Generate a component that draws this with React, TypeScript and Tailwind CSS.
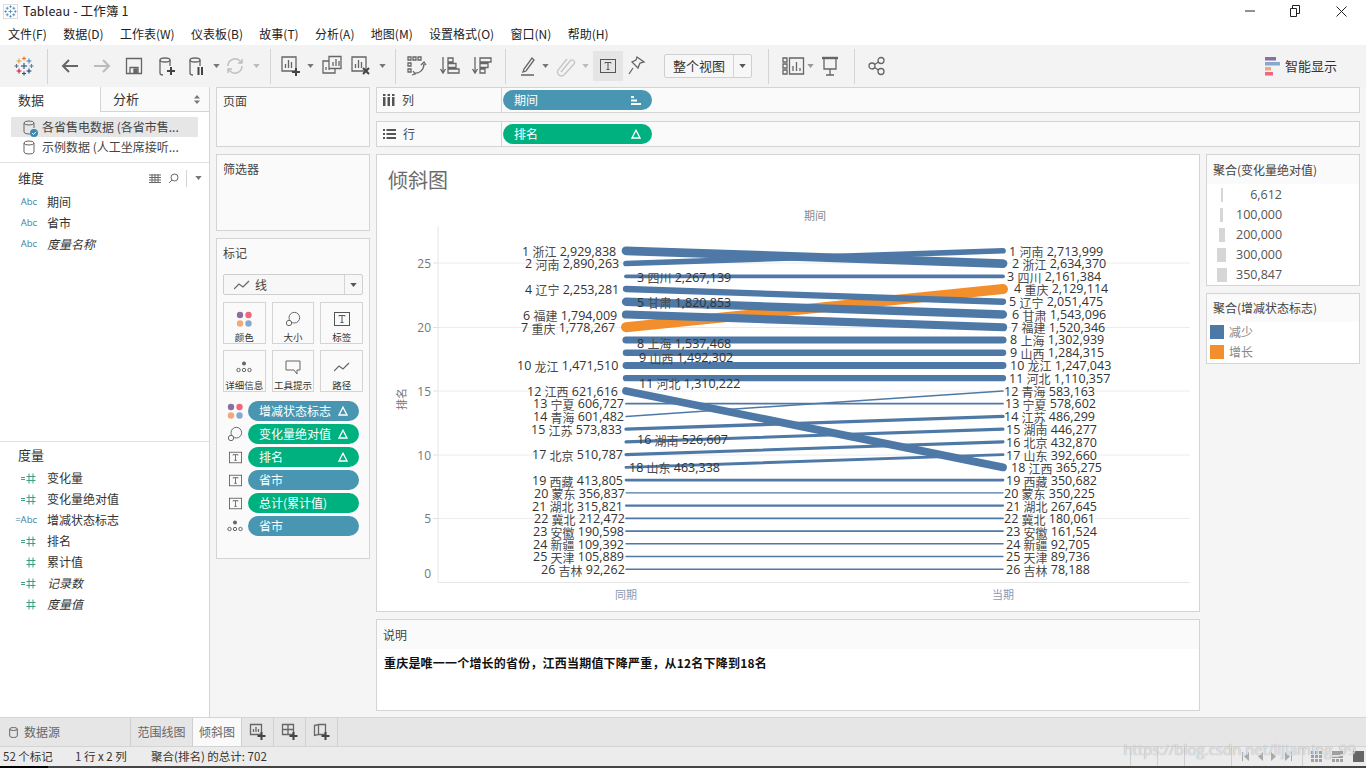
import { ReactNode } from "react"

const ui = "font-['Noto_Sans_CJK_SC','Open_Sans',sans-serif]"
const gray = "#666666"

const leftLabels: [number, string, string, number, number][] = [
  [1, "浙江", "2,929,838", 522, 251],
  [2, "河南", "2,890,263", 525, 263.5],
  [3, "四川", "2,267,139", 637, 277],
  [4, "辽宁", "2,253,281", 525, 289],
  [5, "甘肃", "1,820,853", 637, 302],
  [6, "福建", "1,794,009", 523, 315],
  [7, "重庆", "1,778,267", 521, 327.5],
  [8, "上海", "1,537,468", 637, 343],
  [9, "山西", "1,492,302", 639, 357.5],
  [10, "龙江", "1,471,510", 517, 365.5],
  [11, "河北", "1,310,222", 639, 383],
  [12, "江西", "621,616", 527, 391],
  [13, "宁夏", "606,727", 533, 403.5],
  [14, "青海", "601,482", 533, 416.5],
  [15, "江苏", "573,833", 531, 429.5],
  [16, "湖南", "526,607", 637, 439.5],
  [17, "北京", "510,787", 532, 454.5],
  [18, "山东", "463,338", 629, 467],
  [19, "西藏", "413,805", 532, 480.5],
  [20, "蒙东", "356,837", 534, 493],
  [21, "湖北", "315,821", 532, 506],
  [22, "冀北", "212,472", 534, 518.5],
  [23, "安徽", "190,598", 533, 531.5],
  [24, "新疆", "109,392", 533, 544],
  [25, "天津", "105,889", 533, 556.5],
  [26, "吉林", "92,262", 541, 569.5],
]

const rightLabels: [number, string, string, number, number][] = [
  [1, "河南", "2,713,999", 1009, 251],
  [2, "浙江", "2,634,370", 1012, 263.5],
  [3, "四川", "2,161,384", 1007, 276.5],
  [4, "重庆", "2,129,114", 1014, 288.5],
  [5, "辽宁", "2,051,475", 1009, 301.5],
  [6, "甘肃", "1,543,096", 1012, 314.5],
  [7, "福建", "1,520,346", 1011, 327],
  [8, "上海", "1,302,939", 1010, 339.5],
  [9, "山西", "1,284,315", 1010, 352.5],
  [10, "龙江", "1,247,043", 1010, 365],
  [11, "河北", "1,110,357", 1009, 378],
  [12, "青海", "583,163", 1004, 391],
  [13, "宁夏", "578,602", 1005, 403.5],
  [14, "江苏", "486,299", 1004, 416.5],
  [15, "湖南", "446,277", 1006, 429],
  [16, "北京", "432,870", 1006, 442],
  [17, "山东", "392,660", 1006, 455],
  [18, "江西", "365,275", 1011, 467.5],
  [19, "西藏", "350,682", 1006, 480.5],
  [20, "蒙东", "350,225", 1004, 493],
  [21, "湖北", "267,645", 1006, 506],
  [22, "冀北", "180,061", 1004, 518.5],
  [23, "安徽", "161,524", 1006, 531.5],
  [24, "新疆", "92,705", 1006, 544],
  [25, "天津", "89,736", 1006, 556.5],
  [26, "吉林", "78,188", 1006, 569.5],
]

// from rank, to rank, change in thousands
const lines: [number, number, number][] = [
  [2, 1, 176], [1, 2, 295], [3, 3, 106], [4, 5, 202], [5, 6, 278], [6, 7, 274],
  [8, 8, 235], [9, 9, 208], [10, 10, 224], [11, 11, 200], [12, 18, 256], [13, 13, 28],
  [14, 12, 18], [15, 14, 87], [16, 15, 80], [17, 16, 78], [18, 17, 71], [19, 19, 63],
  [20, 20, 6.6], [21, 21, 48], [22, 22, 32], [23, 23, 29], [24, 24, 17], [25, 25, 16], [26, 26, 14],
]

const rankY = (r: number) => 250.8 + (r - 1) * 12.74

function Crosses({ size = 20, mono }: { size?: number; mono?: string }) {
  const c = (x: number, y: number, r: number, col: string, w = 1.1) => (
    <g stroke={mono ?? col} strokeWidth={w} key={`${x}-${y}`}>
      <line x1={x - r} y1={y} x2={x + r} y2={y} />
      <line x1={x} y1={y - r} x2={x} y2={y + r} />
    </g>
  )
  return (
    <svg width={size} height={size} viewBox="0 0 20 20">
      {c(10, 10, 3, "#2f4f7f")}
      {c(10, 2.5, 2, "#e8762b")}
      {c(10, 17.5, 2, "#2f4f7f")}
      {c(2.5, 10, 2, "#5b6f99")}
      {c(17.5, 10, 2, "#4c87b9")}
      {c(5, 5, 2.4, "#e8a23b")}
      {c(15, 5, 2.4, "#4c87b9")}
      {c(5, 15, 2.4, "#c72037")}
      {c(15, 15, 2.4, "#1f447a")}
    </svg>
  )
}

function Ico({ w = 22, h = 22, children }: { w?: number; h?: number; children: ReactNode }) {
  return (
    <svg width={w} height={h} viewBox={`0 0 ${w} ${h}`} fill="none" stroke={gray} strokeWidth="1.3">
      {children}
    </svg>
  )
}

const Plus = ({ x, y }: { x: number; y: number }) => (
  <path d={`M${x - 4} ${y}h8M${x} ${y - 4}v8`} stroke="#444" strokeWidth="2" />
)

const Cyl = ({ x = 5, h = 15 }: { x?: number; h?: number }) => (
  <>
    <ellipse cx={x + 5} cy="5" rx="5" ry="2" />
    <path d={`M${x} 5v${h - 2}q0 2 3 2M${x + 10} 5v6`} />
  </>
)

function TBox({ size = 18 }: { size?: number }) {
  return (
    <svg width={size} height={size - 2} viewBox="0 0 18 16" fill="none" stroke="#555">
      <rect x="1.5" y="1.5" width="15" height="13" />
      <path d="M6 5.5v-1h6v1M9 4.5v7M7.5 11.5h3" />
    </svg>
  )
}

function Dots() {
  return (
    <svg width="20" height="20" viewBox="0 0 20 20">
      <circle cx="6" cy="6" r="3.2" fill="#8b6f9e" />
      <circle cx="14.5" cy="6" r="3.2" fill="#f0667e" />
      <circle cx="6" cy="14.5" r="3.2" fill="#f2a878" />
      <circle cx="14.5" cy="14.5" r="3.2" fill="#88a8d0" />
    </svg>
  )
}

function SizeIco() {
  return (
    <svg width="16" height="16" viewBox="0 0 18 18" fill="none" stroke="#666" strokeWidth="1.1">
      <circle cx="10.5" cy="7.5" r="6" />
      <circle cx="4.5" cy="13.5" r="3" fill="#fafafa" />
    </svg>
  )
}

function DetailIco() {
  return (
    <svg width="16" height="12" viewBox="0 0 16 12" fill="none" stroke="#666">
      <circle cx="8" cy="2.5" r="2" fill="#666" stroke="none" />
      <circle cx="2.5" cy="9" r="1.7" />
      <circle cx="8" cy="9" r="1.7" />
      <circle cx="13.5" cy="9" r="1.7" />
    </svg>
  )
}

const Caret = ({ color = "#777" }: { color?: string }) => (
  <svg width="7" height="4" viewBox="0 0 8 5">
    <path d="M0 0h8L4 5z" fill={color} />
  </svg>
)

function Delta() {
  return (
    <svg width="10" height="10" viewBox="0 0 10 10" fill="none" stroke="#fff" strokeWidth="1.3">
      <path d="M5 1.2L9 9H1z" />
    </svg>
  )
}

function Pill({ label, color, delta, sort }: { label: string; color: "blue" | "green"; delta?: boolean; sort?: boolean }) {
  return (
    <div className={`flex h-[20px] w-full items-center justify-between rounded-[10px] pl-[11px] pr-[11px] text-[12px] text-white ${color === "blue" ? "bg-[#4996b2]" : "bg-[#00b180]"}`}>
      <span className="whitespace-nowrap">{label}</span>
      {delta && <Delta />}
      {sort && (
        <svg width="10" height="9" viewBox="0 0 10 9" fill="#fff">
          <rect x="0" y="0" width="3" height="2" />
          <rect x="0" y="3.5" width="6" height="2" />
          <rect x="0" y="7" width="10" height="2" />
        </svg>
      )}
    </div>
  )
}

const Divider = ({ className = "" }: { className?: string }) => <div className={`h-[35px] w-px shrink-0 bg-[#d4d4d4] ${className}`} />

function Btn({ className, children }: { className: string; children: ReactNode }) {
  return <div className={`flex h-[30px] shrink-0 items-center justify-center ${className}`}>{children}</div>
}

function Toolbar() {
  return (
    <div className="flex h-[42px] shrink-0 items-center bg-[#f3f3f3]">
      <Btn className="w-[47px]"><Crosses /></Btn>
      <Divider />
      <Btn className="ml-[6px] w-[32px]">
        <Ico><path d="M19 11H4M10 5l-6 6 6 6" stroke="#666" strokeWidth="2" /></Ico>
      </Btn>
      <Btn className="w-[32px]">
        <Ico><path d="M3 11h15M12 5l6 6-6 6" stroke="#bbb" strokeWidth="2" /></Ico>
      </Btn>
      <Btn className="w-[32px]">
        <Ico w={18} h={18}><path d="M1.5 1.5h15v15h-15zM5 16.5v-6h8v6" /><rect x="9" y="12" width="3" height="4" fill="#666" /></Ico>
      </Btn>
      <Btn className="w-[32px]">
        <Ico><Cyl /><Plus x={16} y={16} /></Ico>
      </Btn>
      <Btn className="w-[28px]">
        <Ico><Cyl /><path d="M13.5 12v8M17 12v8" stroke="#444" strokeWidth="2" /></Ico>
      </Btn>
      <Btn className="w-[12px]"><Caret /></Btn>
      <Btn className="w-[26px]">
        <Ico w={20} h={20}><path d="M3 10a7 7 0 0 1 12-5l2 2M17 10a7 7 0 0 1-12 5l-2-2M17 3v4h-4M3 17v-4h4" stroke="#c0c0c0" strokeWidth="1.5" /></Ico>
      </Btn>
      <Btn className="w-[16px]"><Caret color="#bbb" /></Btn>
      <Divider className="ml-[6px]" />
      <Btn className="ml-[6px] w-[28px]">
        <Ico><path d="M2 2h14v14h-14zM5.5 13V9M8.5 13V5M11.5 13V7" /><Plus x={16} y={17} /></Ico>
      </Btn>
      <Btn className="w-[10px]"><Caret /></Btn>
      <Btn className="ml-[3px] w-[28px]">
        <Ico><path d="M8 1.5h12v12h-12zM12 11V7M15 11V4M18 11V6M8 6H2v12h12v-4.5M5 15v-3M8 15v-5" /></Ico>
      </Btn>
      <Btn className="ml-[1px] w-[28px]">
        <Ico><path d="M2 2h14v14h-14zM5.5 13V9M8.5 13V5M11.5 13V7" /><path d="M13 13l6 6M19 13l-6 6" stroke="#444" strokeWidth="2" /></Ico>
      </Btn>
      <Btn className="ml-[2px] w-[10px]"><Caret /></Btn>
      <Divider className="ml-[8px]" />
      <Btn className="ml-[7px] w-[28px]">
        <Ico><path d="M2 2h3v3H2zM7 2h3v3H7zM12 2h3v3h-3zM2 8h3v3H2zM2 14h3v3H2zM8 18c5 1 10-3 10-9M15 10l3-3 2 3M7 16l2 3-3 1" /></Ico>
      </Btn>
      <Btn className="ml-[5px] w-[28px]">
        <Ico><path d="M4 2v15M1.5 14L4 18l2.5-4M9 3h5v4H9zM9 8.5h8v4H9zM9 14h11v4H9z" /></Ico>
      </Btn>
      <Btn className="ml-[4px] w-[28px]">
        <Ico><path d="M4 2v15M1.5 14L4 18l2.5-4M9 3h11v4H9zM9 8.5h8v4H9zM9 14h5v4H9z" /></Ico>
      </Btn>
      <Divider className="ml-[9px]" />
      <Btn className="ml-[10px] w-[24px]">
        <Ico><path d="M7 14l-1 3 3-1 8-11-2-2zM4 20h13" /></Ico>
      </Btn>
      <Btn className="w-[10px]"><Caret /></Btn>
      <Btn className="ml-[2px] w-[28px]">
        <Ico><path d="M6 17l9-11a2.5 2.5 0 0 1 4 3L9 20a4 4 0 0 1-6-5L12 4" stroke="#c4c4c4" /></Ico>
      </Btn>
      <Btn className="w-[10px]"><Caret color="#bbb" /></Btn>
      <Btn className="ml-[3px] w-[30px] bg-[#e5e5e5]"><TBox /></Btn>
      <Btn className="w-[28px]">
        <Ico><path d="M11 2l7 5-4 1-2 5-6-6 4-2zM7 13l-4 6" /></Ico>
      </Btn>
      <div className="ml-[13px] flex h-[24px] w-[88px] shrink-0 items-center rounded-[2px] border border-[#cfcfcf] bg-[#f7f7f7] text-[13px] text-[#333]">
        <span className="flex-1 text-center">整个视图</span>
        <span className="flex h-full w-[18px] items-center justify-center border-l border-[#d4d4d4]"><Caret color="#555" /></span>
      </div>
      <Divider className="ml-[16px]" />
      <Btn className="ml-[12px] w-[25px]">
        <Ico w={24} h={20}><path d="M1 2h4v4H1zM1 8h4v4H1zM1 14h4v4H1zM7.5 2h14v16h-14zM11 15v-5M14.5 15V6M18 15v-3" /></Ico>
      </Btn>
      <Btn className="w-[8px]"><Caret color="#999" /></Btn>
      <Btn className="ml-[2px] w-[28px]">
        <Ico><path d="M3 3h16M5 3v11h12V3M11 14v6M7 20h8" /><path d="M3 3h16" strokeWidth="2.4" /></Ico>
      </Btn>
      <Divider className="ml-[10px]" />
      <Btn className="ml-[8px] w-[28px]">
        <Ico w={18} h={20}><circle cx="4" cy="10" r="3" /><circle cx="13" cy="4.5" r="3" /><circle cx="13" cy="15.5" r="3" /><path d="M6.5 8.5l4-2.5M6.5 11.5l4 2.5" /></Ico>
      </Btn>
      <div className="ml-auto mr-[29px] flex items-center gap-[5px] text-[13px] text-[#333]">
        <svg width="15" height="20" viewBox="0 0 15 20">
          <rect x="0" y="1" width="11" height="3.5" fill="#8b6f9e" />
          <rect x="0" y="6" width="15" height="3.5" fill="#88a8d0" />
          <rect x="0" y="11" width="6" height="3.5" fill="#f2a878" />
          <rect x="0" y="16" width="8" height="3.5" fill="#f0667e" />
        </svg>
        智能显示
      </div>
    </div>
  )
}

function Field({ type, name, italic }: { type: "abc" | "calcabc" | "num" | "calc"; name: string; italic?: boolean }) {
  return (
    <div className="flex h-[21px] items-center text-[12px] text-[#333]">
      <span className="flex w-[38px] shrink-0 justify-end pr-[1px] pt-[1px]">
        {type === "abc" && <span className="text-[9.5px] text-[#3f7f9f] font-['Open_Sans',sans-serif]">Abc</span>}
        {type === "calcabc" && <span className="text-[9.5px] text-[#3f7f9f] font-['Open_Sans',sans-serif]">=Abc</span>}
        {(type === "num" || type === "calc") && (
          <svg width="16" height="11" viewBox="0 0 16 11" stroke="#3f9f7f" fill="none">
            {type === "calc" && <path d="M0 4.5h4M0 6.5h4" />}
            <path d="M8 .5v10M12 .5v10M5.5 3.5h9M5.5 7.5h9" />
          </svg>
        )}
      </span>
      <span className={`ml-[9px] ${italic ? "italic" : ""}`}>{name}</span>
    </div>
  )
}

function DataPane() {
  return (
    <div className="flex w-[210px] shrink-0 flex-col border-r border-[#d4d4d4] bg-white">
      <div className="flex h-[25px] shrink-0 text-[13px] text-[#333]">
        <div className="flex w-[100px] items-center pl-[18px]">数据</div>
        <div className="flex flex-1 items-center justify-between border-b border-l border-[#d4d4d4] bg-[#fafafa] pl-[12px] pr-[9px]">
          分析
          <svg width="6" height="9" viewBox="0 0 6 9" fill="#777"><path d="M0 3.5L3 0l3 3.5zM0 5.5L3 9l3-3.5z" /></svg>
        </div>
      </div>
      <div className="h-[51px] shrink-0 border-b border-[#e2e2e2] pt-[5px] text-[12px] text-[#444]">
        <div className="mx-[11px] flex h-[20px] items-center gap-[7px] bg-[#e6e6e6] pl-[12px]">
          <span className="relative flex">
            <svg width="12" height="15" viewBox="0 0 12 15" fill="none" stroke="#666"><ellipse cx="6" cy="3" rx="5" ry="2" /><path d="M1 3v9q0 2 5 2h1M11 3v5" /></svg>
            <svg className="absolute -bottom-[2px] -right-[3px]" width="8" height="8" viewBox="0 0 8 8" fill="none">
              <circle cx="4" cy="4" r="4" fill="#3f86ad" />
              <path d="M2 4l1.5 1.5L6 2.8" stroke="#fff" />
            </svg>
          </span>
          <span className="whitespace-nowrap">各省售电数据 (各省市售...</span>
        </div>
        <div className="mx-[11px] flex h-[20px] items-center gap-[7px] pl-[12px]">
          <svg width="12" height="15" viewBox="0 0 12 15" fill="none" stroke="#666"><ellipse cx="6" cy="3" rx="5" ry="2" /><path d="M1 3v9q0 2 5 2t5-2V3" /></svg>
          <span className="whitespace-nowrap">示例数据 (人工坐席接听...</span>
        </div>
      </div>
      <div className="h-[279px] shrink-0 border-b border-[#e2e2e2]">
        <div className="flex h-[27px] items-center pl-[18px] pr-[7px] pt-[3px] text-[13px] text-[#333]">
          维度
          <div className="ml-auto flex items-center">
            <svg width="12" height="9" viewBox="0 0 12 9" stroke="#666"><path d="M0 1h12M0 3.5h12M0 6h12M0 8.5h12M3 0v9M6 0v9M9 0v9" /></svg>
            <svg className="ml-[7px]" width="11" height="11" viewBox="0 0 11 11" fill="none" stroke="#666"><circle cx="6.5" cy="4.5" r="3.5" /><path d="M4 7l-3 3" /></svg>
            <span className="ml-[7px] mr-[8px] h-[17px] w-px bg-[#d4d4d4]" />
            <Caret />
          </div>
        </div>
        <div className="pt-[1px]">
          <Field type="abc" name="期间" />
          <Field type="abc" name="省市" />
          <Field type="abc" name="度量名称" italic />
        </div>
      </div>
      <div className="flex-1">
        <div className="flex h-[25px] items-center pl-[18px] text-[13px] text-[#333]">度量</div>
        <Field type="calc" name="变化量" />
        <Field type="calc" name="变化量绝对值" />
        <Field type="calcabc" name="增减状态标志" />
        <Field type="calc" name="排名" />
        <Field type="num" name="累计值" />
        <Field type="calc" name="记录数" italic />
        <Field type="num" name="度量值" italic />
      </div>
    </div>
  )
}

function MarkBtn({ icon, label }: { icon: ReactNode; label: string }) {
  return (
    <div className="flex h-[42px] flex-col items-center border border-[#d4d4d4] bg-[#fafafa] pt-[6px] text-[9.5px] leading-[12px] text-[#333]">
      <div className="flex h-[20px] items-center">{icon}</div>
      <span className="mt-[2px] whitespace-nowrap">{label}</span>
    </div>
  )
}

function MarksRow({ icon, children }: { icon: ReactNode; children: ReactNode }) {
  return (
    <div className="flex h-[20px] items-center">
      <div className="flex w-[25px] shrink-0 justify-center pr-[1px]">{icon}</div>
      {children}
    </div>
  )
}

function MarksColumn() {
  const lineIco = (
    <svg width="16" height="10" viewBox="0 0 16 10" fill="none" stroke="#666" strokeWidth="1.2"><path d="M0 9l5-5 4 3 6-6" /></svg>
  )
  return (
    <div className="flex w-[166px] shrink-0 flex-col gap-[7px] pl-[6px] pr-[6px] text-[12px] text-[#444]">
      <div className="h-[60px] border border-[#d4d4d4] bg-[#fafafa] pl-[6px] pt-[4px]">页面</div>
      <div className="h-[77px] border border-[#d4d4d4] bg-[#fafafa] pl-[6px] pt-[5px]">筛选器</div>
      <div className="h-[321px] border border-[#d4d4d4] bg-[#fafafa] px-[6px] pt-[5px]">
        <div className="h-[30px]">标记</div>
        <div className="flex h-[21px] items-center rounded-[2px] border border-[#cfcfcf] bg-[#f7f7f7]">
          <span className="ml-[10px] mr-[5px]">{lineIco}</span>
          <span className="flex-1">线</span>
          <span className="flex h-full w-[18px] items-center justify-center border-l border-[#d4d4d4]"><Caret color="#555" /></span>
        </div>
        <div className="mt-[7px] grid grid-cols-3 gap-x-[6px] gap-y-[6px]">
          <MarkBtn icon={<Dots />} label="颜色" />
          <MarkBtn icon={<SizeIco />} label="大小" />
          <MarkBtn icon={<TBox />} label="标签" />
          <MarkBtn icon={<DetailIco />} label="详细信息" />
          <MarkBtn
            icon={<svg width="16" height="15" viewBox="0 0 16 15" fill="none" stroke="#666"><path d="M1 1h14v9h-3v4l-3-4H1z" /></svg>}
            label="工具提示"
          />
          <MarkBtn icon={lineIco} label="路径" />
        </div>
        <div className="mt-[9px] flex flex-col gap-[3px] pr-[4px]">
          <MarksRow icon={<Dots />}><Pill label="增减状态标志" color="blue" delta /></MarksRow>
          <MarksRow icon={<SizeIco />}><Pill label="变化量绝对值" color="green" delta /></MarksRow>
          <MarksRow icon={<TBox size={15} />}><Pill label="排名" color="green" delta /></MarksRow>
          <MarksRow icon={<TBox size={15} />}><Pill label="省市" color="blue" /></MarksRow>
          <MarksRow icon={<TBox size={15} />}><Pill label="总计(累计值)" color="green" /></MarksRow>
          <MarksRow icon={<DetailIco />}><Pill label="省市" color="blue" /></MarksRow>
        </div>
      </div>
    </div>
  )
}

function Shelf({ icon, label, children }: { icon: ReactNode; label: string; children: ReactNode }) {
  return (
    <div className="flex h-[26px] w-[984px] border border-[#d4d4d4] bg-[#fafafa] text-[12px] text-[#444]">
      <div className="flex w-[125px] shrink-0 items-center gap-[7px] border-r border-[#d4d4d4] pl-[6px]">
        {icon}
        {label}
      </div>
      <div className="ml-[1px] flex w-[149px] items-center">{children}</div>
    </div>
  )
}

function ChartLabel({ d }: { d: [number, string, string, number, number] }) {
  return (
    <text x={d[3]} y={d[4]} dominantBaseline="central" className="fill-[#333] text-[12.5px] font-['Open_Sans',sans-serif]">
      {d[0]} <tspan className="fill-[#4a4a4a] text-[12px] font-['Noto_Sans_CJK_SC',sans-serif]">{d[1]}</tspan> {d[2]}
    </text>
  )
}

function SlopeChart() {
  const ticks: [string, number, number][] = [
    ["25", 263, 263],
    ["20", 327.5, 327],
    ["15", 391, 391],
    ["10", 455, 455],
    ["5", 518.5, 518],
  ]
  return (
    <svg viewBox="377 205 822 406" className="h-[406px] w-[822px]">
      <text x="815" y="215" textAnchor="middle" dominantBaseline="central" className={`fill-[#888] text-[11px] ${ui}`}>期间</text>
      <path d="M438 226V582" stroke="#e6e6e6" />
      {ticks.map(([t, y, ly]) => (
        <g key={t}>
          <path d={`M438 ${y}H1190`} stroke="#ececec" />
          <path d={`M433 ${y}H438`} stroke="#e0e0e0" />
          <text x="431" y={ly} textAnchor="end" dominantBaseline="central" className="fill-[#777] text-[12px] font-['Open_Sans',sans-serif]">{t}</text>
        </g>
      ))}
      <path d="M438 582.5H1190" stroke="#e6e6e6" />
      <text x="431" y="573" textAnchor="end" dominantBaseline="central" className="fill-[#777] text-[12px] font-['Open_Sans',sans-serif]">0</text>
      <text x="0" y="0" transform="translate(401 399) rotate(-90)" textAnchor="middle" dominantBaseline="central" className={`fill-[#777] text-[11px] ${ui}`}>排名</text>
      <line x1="626" y1={rankY(7)} x2="1003" y2={rankY(4)} stroke="#f28e2b" strokeWidth="10" strokeLinecap="round" />
      {lines.map(([a, b, k]) => (
        <line key={a} x1="626" y1={rankY(a)} x2="1003" y2={rankY(b)} stroke="#4e79a7" strokeWidth={1 + k / 38} strokeLinecap="round" />
      ))}
      {leftLabels.map((d) => <ChartLabel key={d[0]} d={d} />)}
      {rightLabels.map((d) => <ChartLabel key={d[0]} d={d} />)}
      <text x="626" y="594" textAnchor="middle" dominantBaseline="central" className={`fill-[#8a9ab0] text-[11px] ${ui}`}>同期</text>
      <text x="1003" y="594" textAnchor="middle" dominantBaseline="central" className={`fill-[#8a9ab0] text-[11px] ${ui}`}>当期</text>
    </svg>
  )
}

function Legends() {
  const sizes: [string, string][] = [
    ["6,612", "w-[2px]"],
    ["100,000", "w-[3px]"],
    ["200,000", "w-[6px]"],
    ["300,000", "w-[9px]"],
    ["350,847", "w-[10px]"],
  ]
  return (
    <div className="ml-[6px] flex w-[154px] shrink-0 flex-col gap-[7px]">
      <div className="h-[132px] border border-[#d4d4d4] bg-white">
        <div className="flex h-[29px] items-center bg-[#fafafa] pl-[6px] text-[12px] text-[#444]">聚合(变化量绝对值)</div>
        <div className="pt-[1px]">
          {sizes.map(([v, w]) => (
            <div key={v} className="flex h-[20px] items-center">
              <div className="flex w-[29px] shrink-0 justify-center">
                <span className={`h-[14px] bg-[#d6d6d6] ${w}`} />
              </div>
              <span className="w-[46px] text-right text-[12.5px] text-[#555] font-['Open_Sans',sans-serif]">{v}</span>
            </div>
          ))}
        </div>
      </div>
      <div className="h-[71px] border border-[#d4d4d4] bg-white">
        <div className="flex h-[28px] items-center bg-[#fafafa] pl-[6px] text-[12px] text-[#444]">聚合(增减状态标志)</div>
        <div className="flex h-[20px] items-center pl-[3px] text-[12px] text-[#888]">
          <span className="mr-[5px] h-[14px] w-[14px] bg-[#4e79a7]" />减少
        </div>
        <div className="flex h-[20px] items-center pl-[3px] text-[12px] text-[#888]">
          <span className="mr-[5px] h-[14px] w-[14px] bg-[#f28e2b]" />增长
        </div>
      </div>
    </div>
  )
}

function Workspace() {
  return (
    <div className="flex min-w-0 flex-1 flex-col gap-[8px]">
      <Shelf
        label="列"
        icon={<svg width="12" height="12" viewBox="0 0 12 12" fill="#555"><rect x="0" y="3" width="2.5" height="9" /><rect x="4.5" y="3" width="2.5" height="9" /><rect x="9" y="3" width="2.5" height="9" /><rect x="0" y="0" width="2.5" height="2" /><rect x="4.5" y="0" width="2.5" height="2" /><rect x="9" y="0" width="2.5" height="2" /></svg>}
      >
        <Pill label="期间" color="blue" sort />
      </Shelf>
      <Shelf
        label="行"
        icon={<svg width="13" height="10" viewBox="0 0 13 10" fill="#555"><rect x="0" y="0" width="2" height="2" /><rect x="3.5" y="0" width="9.5" height="2" /><rect x="0" y="4" width="2" height="2" /><rect x="3.5" y="4" width="9.5" height="2" /><rect x="0" y="8" width="2" height="2" /><rect x="3.5" y="8" width="9.5" height="2" /></svg>}
      >
        <Pill label="排名" color="green" delta />
      </Shelf>
      <div className="-mt-px flex">
        <div className="flex w-[824px] shrink-0 flex-col gap-[7px]">
          <div className="h-[458px] border border-[#d4d4d4] bg-white">
            <div className="flex h-[50px] items-center pl-[11px] text-[20px] text-[#6b6b6b]">倾斜图</div>
            <SlopeChart />
          </div>
          <div className="h-[92px] border border-[#d4d4d4] bg-white">
            <div className="flex h-[29px] items-center bg-[#fafafa] pl-[6px] text-[12px] text-[#444]">说明</div>
            <div className="pl-[7px] pt-[6px] text-[12px] font-bold leading-[16px] tracking-[0.2px] text-[#111]">重庆是唯一一个增长的省份，江西当期值下降严重，从12名下降到18名</div>
          </div>
        </div>
        <Legends />
      </div>
    </div>
  )
}

function SheetAddTab({ children }: { children: ReactNode }) {
  return <div className="flex w-[32px] items-center justify-center border-r border-[#cfcfcf]">{children}</div>
}

function BottomBars() {
  return (
    <>
      <div className="flex h-[30px] shrink-0 border-y border-[#d4d4d4] bg-[#e6e6e6] text-[12px] text-[#666]">
        <div className="flex w-[131px] items-center gap-[5px] border-r border-[#cfcfcf] pl-[9px]">
          <svg width="9" height="11" viewBox="0 0 9 11" fill="none" stroke="#666"><ellipse cx="4.5" cy="2" rx="3.8" ry="1.5" /><path d="M.7 2v7q0 1.5 3.8 1.5T8.3 9V2" /></svg>
          <span className="ml-[1px]">数据源</span>
        </div>
        <div className="flex w-[62px] items-center justify-center border-r border-[#cfcfcf]">范围线图</div>
        <div className="flex w-[49px] items-center justify-center border-r border-[#cfcfcf] bg-[#fafafa]">倾斜图</div>
        <SheetAddTab>
          <Ico w={18} h={18}><path d="M1.5 1.5h11v10h-11zM4.5 9V6M7 9V4M9.5 9V6" /><Plus x={12.5} y={13} /></Ico>
        </SheetAddTab>
        <SheetAddTab>
          <Ico w={18} h={18}><path d="M1.5 1.5h11v10h-11zM7 1.5v10M1.5 6.5h11" /><Plus x={12.5} y={13} /></Ico>
        </SheetAddTab>
        <SheetAddTab>
          <Ico w={18} h={18}><path d="M1.5 2.5l4-1v10l-4 1zM5.5 1.5h7v10h-7" /><Plus x={12.5} y={13} /></Ico>
        </SheetAddTab>
      </div>
      <div className="flex h-[19px] shrink-0 items-center bg-[#ececec] pl-[3px] text-[11.5px] text-[#333]">
        <span className="w-[72px]">52 个标记</span>
        <span className="w-[76px]">1 行 x 2 列</span>
        <span>聚合(排名) 的总计: 702</span>
        <div className="ml-auto flex h-full items-center text-[#a8a8a8]">
          <span className="h-full w-[27px] border-l border-[#cfcfcf]" />
          <span className="h-full w-[27px] border-l border-[#cfcfcf]" />
          <span className="h-full w-[47px] border-l border-[#cfcfcf]" />
          <div className="flex h-full w-[71px] items-center justify-around border-l border-[#cfcfcf] px-[6px]">
            <svg width="7" height="9" viewBox="0 0 7 9" fill="#aaa"><path d="M1 0v9H0V0zM7 0v9L2 4.5z" /></svg>
            <svg width="5" height="9" viewBox="0 0 5 9" fill="#aaa"><path d="M5 0v9L0 4.5z" /></svg>
            <svg width="5" height="9" viewBox="0 0 5 9" fill="#aaa"><path d="M0 0v9l5-4.5z" /></svg>
            <svg width="7" height="9" viewBox="0 0 7 9" fill="#aaa"><path d="M6 0v9h1V0zM0 0v9l5-4.5z" /></svg>
          </div>
          <div className="flex h-full items-center gap-[10px] border-l border-[#cfcfcf] pl-[8px] pr-[2px]">
            <svg width="11" height="11" viewBox="0 0 11 11" fill="#a0a0a0"><path d="M0 0h3v3H0zM4 0h3v3H4zM8 0h3v3H8zM0 4h3v3H0zM4 4h3v3H4zM8 4h3v3H8zM0 8h3v3H0zM4 8h3v3H4zM8 8h3v3H8z" /></svg>
            <svg width="11" height="11" viewBox="0 0 11 11" fill="#a0a0a0"><path d="M0 0h11v4H0zM0 5h11v2H0zM0 8h3v3H0zM4 8h3v3H4zM8 8h3v3H8z" /></svg>
            <span className="h-[11px] w-[11px] bg-[#666]" />
          </div>
        </div>
      </div>
      <div className="flex h-[2px] shrink-0 bg-[#444]">
        <div className="h-full w-[48px] bg-black" />
      </div>
    </>
  )
}

export default function App() {
  return (
    <div className={`relative flex h-[768px] w-[1366px] flex-col overflow-hidden bg-white ${ui}`}>
      <div className="flex h-[22px] shrink-0 items-center pl-[3px] text-[12.5px] text-[#222]">
        <div className="flex h-[15px] w-[15px] items-center justify-center border border-[#ddd]">
          <Crosses size={13} mono="#3a7bb5" />
        </div>
        <span className="ml-[5px] tracking-[0.15px]">Tableau - 工作簿 1</span>
        <div className="ml-auto flex items-center">
          <svg width="10" height="2" viewBox="0 0 10 2" stroke="#222"><path d="M0 1h10" /></svg>
          <svg className="ml-[35px]" width="10" height="12" viewBox="0 0 10 12" fill="none" stroke="#222"><path d="M.5 3.5h6v8h-6zM2.5 3.5v-3h7v8h-3" /></svg>
          <svg className="ml-[36px] mr-[19px]" width="11" height="11" viewBox="0 0 11 11" stroke="#222"><path d="M.5.5l10 10M10.5.5l-10 10" /></svg>
        </div>
      </div>
      <div className="flex h-[23px] shrink-0 items-center gap-[16.4px] pl-[8px] text-[12px] text-[#222]">
        {["文件(F)", "数据(D)", "工作表(W)", "仪表板(B)", "故事(T)", "分析(A)", "地图(M)", "设置格式(O)", "窗口(N)", "帮助(H)"].map((m) => (
          <span key={m}>{m}</span>
        ))}
      </div>
      <Toolbar />
      <div className="flex min-h-0 flex-1 bg-[#f5f5f5]">
        <DataPane />
        <MarksColumn />
        <Workspace />
      </div>
      <BottomBars />
      <div className="absolute right-[10px] top-[738px] text-[15px] text-white/70 [text-shadow:0_0_1px_#8a8a8a] font-['Open_Sans',sans-serif]">
        https://blog.csdn.net/lijiaming_99
      </div>
    </div>
  )
}
